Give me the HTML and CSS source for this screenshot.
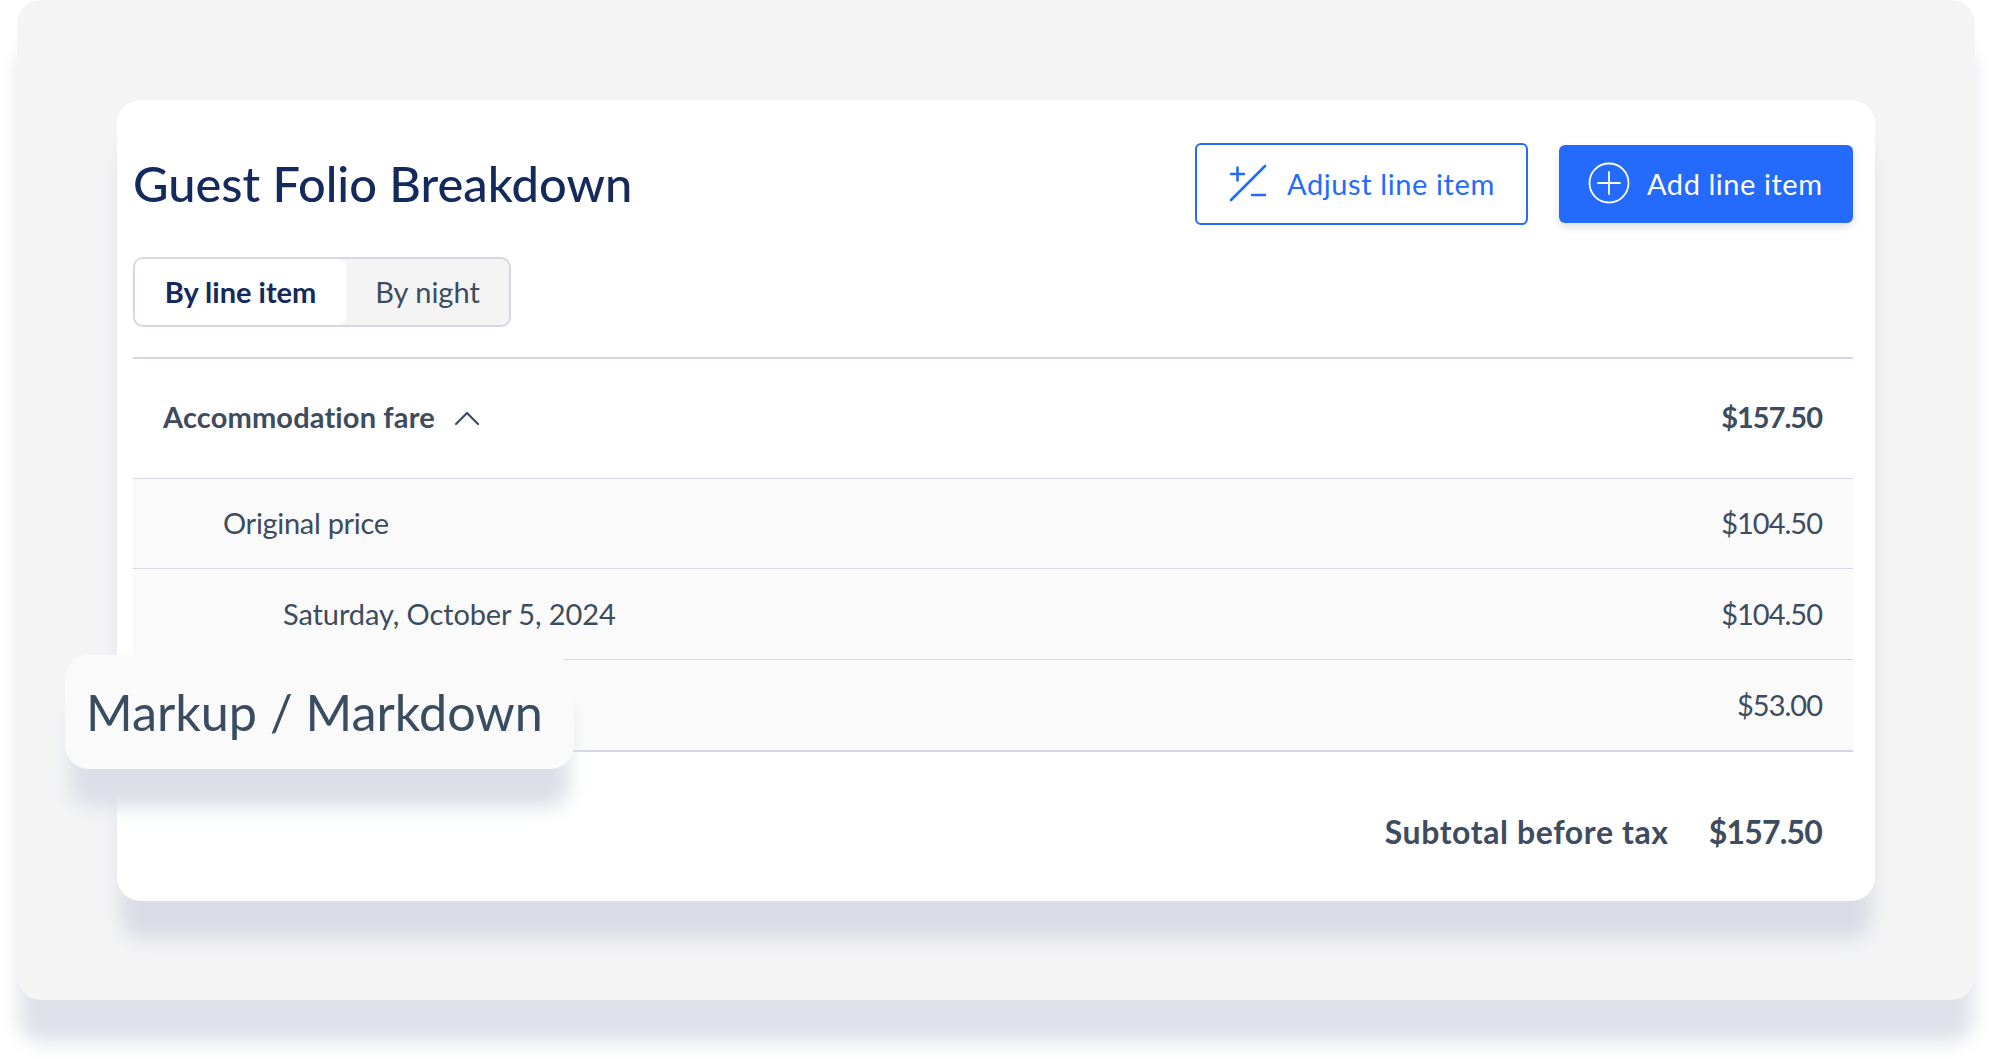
FILE: index.html
```html
<!DOCTYPE html>
<html lang="en">
<head>
  <meta charset="UTF-8" />
  <meta name="viewport" content="width=device-width, initial-scale=1.0"/>
  <title>Guest Folio Breakdown</title>
  <link rel="stylesheet" href="styles.css">
</head>
<body>

  <div class="panel">
    <div class="card">
      <div class="card-head">
        <h1>Guest Folio Breakdown</h1>
        <div class="actions">
          <button class="btn btn-outline">
            <svg class="icon" viewBox="0 0 38 38" fill="none" stroke="currentColor" stroke-width="2.600" stroke-linecap="round">
              <path d="M2 10h13M8.500 3.500v13M36 2L2 36M23 31h13"/>
            </svg>
            Adjust line item
          </button>
          <button class="btn btn-primary">
            <svg class="icon" viewBox="0 0 42 42" fill="none" stroke="currentColor" stroke-width="1.800" stroke-linecap="round">
              <circle cx="21" cy="21" r="19.500"/>
              <path d="M21 10v22M10 21h22"/>
            </svg>
            Add line item
          </button>
        </div>
      </div>

      <div class="tabs">
        <div class="tab tab-active">By line item</div>
        <div class="tab">By night</div>
      </div>

      <div class="rows">
        <div class="row row-main">
          <span class="row-title">
            Accommodation fare
            <svg class="chevron" viewBox="0 0 26 16" fill="none" stroke="currentColor" stroke-width="2.200" stroke-linecap="round" stroke-linejoin="round">
              <path d="M2 14L13 3l11 11"/>
            </svg>
          </span>
          <span class="amount">$157.50</span>
        </div>
        <div class="row row-sub level-1">
          <span class="name-1">Original price</span>
          <span class="amount">$104.50</span>
        </div>
        <div class="row row-sub level-2">
          <span class="name-2">Saturday, October 5, 2024</span>
          <span class="amount">$104.50</span>
        </div>
        <div class="row row-sub row-last">
          <span></span>
          <span class="amount">$53.00</span>
        </div>
        <div class="subtotal">
          <span class="subtotal-label">Subtotal before tax</span>
          <span class="amount">$157.50</span>
        </div>
      </div>
    </div>

    <div class="callout"><span class="callout-text">Markup / Markdown</span></div>
  </div>

</body>
</html>
```

FILE: styles.css
```css
* {
  box-sizing: border-box;
}

body {
  margin: 0;
  height: 1059px;
  overflow: hidden;
  background: white;
  font-family: "Lato", "Liberation Sans", sans-serif;
  color: #3d4c5e;
}

.panel {
  position: relative;
  width: 1958px;
  height: 1000px;
  margin-left: 17px;
  padding: 100px 100px 0;
  background: #f4f4f5;
  border-radius: 24px;
  box-shadow: 0 44px 20px -2px #dfe1ea;
}

.card {
  height: 801px;
  padding: 43px 22px 0 16px;
  background: white;
  border-radius: 24px;
  box-shadow: 0 42px 20px -4px #d9dce5;
}

.card-head {
  display: flex;
  justify-content: space-between;
  align-items: center;
  height: 82px;
}

.card-head h1 {
  margin: 0 0 2px;
  font-size: 48.800px;
  font-weight: 500;
  color: #14295c;
}

.actions {
  display: flex;
  align-items: center;
  gap: 31px;
}

.btn {
  display: flex;
  align-items: center;
  font-family: inherit;
  font-size: 29px;
  border-radius: 6px;
  letter-spacing: 0.6px;
}

.btn-outline {
  width: 333px;
  height: 82px;
  padding: 0 0 2px 32px;
  gap: 20px;
  background: white;
  color: #246bfd;
  border: 2px solid #246bfd;
}

.btn-primary {
  width: 294px;
  height: 78px;
  padding: 0 0 2px 29px;
  gap: 17px;
  background: #246bfd;
  color: white;
  border: none;
  box-shadow: 0 4px 8px rgba(0,0,0,0.12);
  letter-spacing: 0.55px;
}

.btn-outline .icon {
  width: 38px;
  height: 38px;
}

.btn-primary .icon {
  width: 42px;
  height: 42px;
}

.tabs {
  display: inline-flex;
  margin-top: 32px;
  height: 70px;
  width: 378px;
  background: #f4f4f5;
  border: 2px solid #d5d8e3;
  border-radius: 10px;
}

.tab {
  display: flex;
  align-items: center;
  justify-content: center;
  flex: 1;
  padding-bottom: 2px;
  font-size: 29px;
}

.tab-active {
  flex: 0 0 211px;
  background: white;
  border-radius: 8px;
  font-weight: 700;
  color: #14295c;
}

.rows {
  margin-top: 30px;
  border-top: 2px solid #d5d8e3;
}

.row {
  display: flex;
  justify-content: space-between;
  align-items: center;
  padding: 0 31px 4px 30px;
  font-size: 29px;
}

.row-main {
  height: 119px;
  font-weight: 700;
}

.row-title {
  display: flex;
  align-items: center;
  gap: 19px;
  letter-spacing: 0.15px;
}

.chevron {
  width: 26px;
  height: 16px;
  margin-top: 2px;
}

.amount {
  letter-spacing: -1px;
}

.name-1 {
  letter-spacing: -0.3px;
}

.name-2 {
  letter-spacing: -0.1px;
}

.row-sub {
  height: 90px;
  padding-bottom: 2px;
  background: #fafafa;
  border-top: 1px solid #d5d8e3;
}

.level-1 {
  padding-left: 90px;
}

.level-2 {
  height: 91px;
  padding-left: 150px;
}

.row-last {
  height: 93px;
  border-bottom: 2px solid #d5d8e3;
}

.subtotal {
  display: flex;
  justify-content: flex-end;
  gap: 40px;
  padding: 60px 31px 0 0;
  font-size: 32px;
  font-weight: 700;
}

.subtotal .amount {
  letter-spacing: -0.8px;
}

.subtotal-label {
  letter-spacing: 0.6px;
}

.callout {
  position: absolute;
  left: 48px;
  top: 655px;
  width: 509px;
  height: 114px;
  padding: 0 0 2px 21px;
  display: flex;
  align-items: center;
  background: #fafafa;
  border-radius: 24px;
  box-shadow: 0 43px 20px -5px #dcdfe8;
  font-size: 50.300px;
  color: #3a4c60;
}

.callout-text {
  filter: blur(0.5px);
}
```
